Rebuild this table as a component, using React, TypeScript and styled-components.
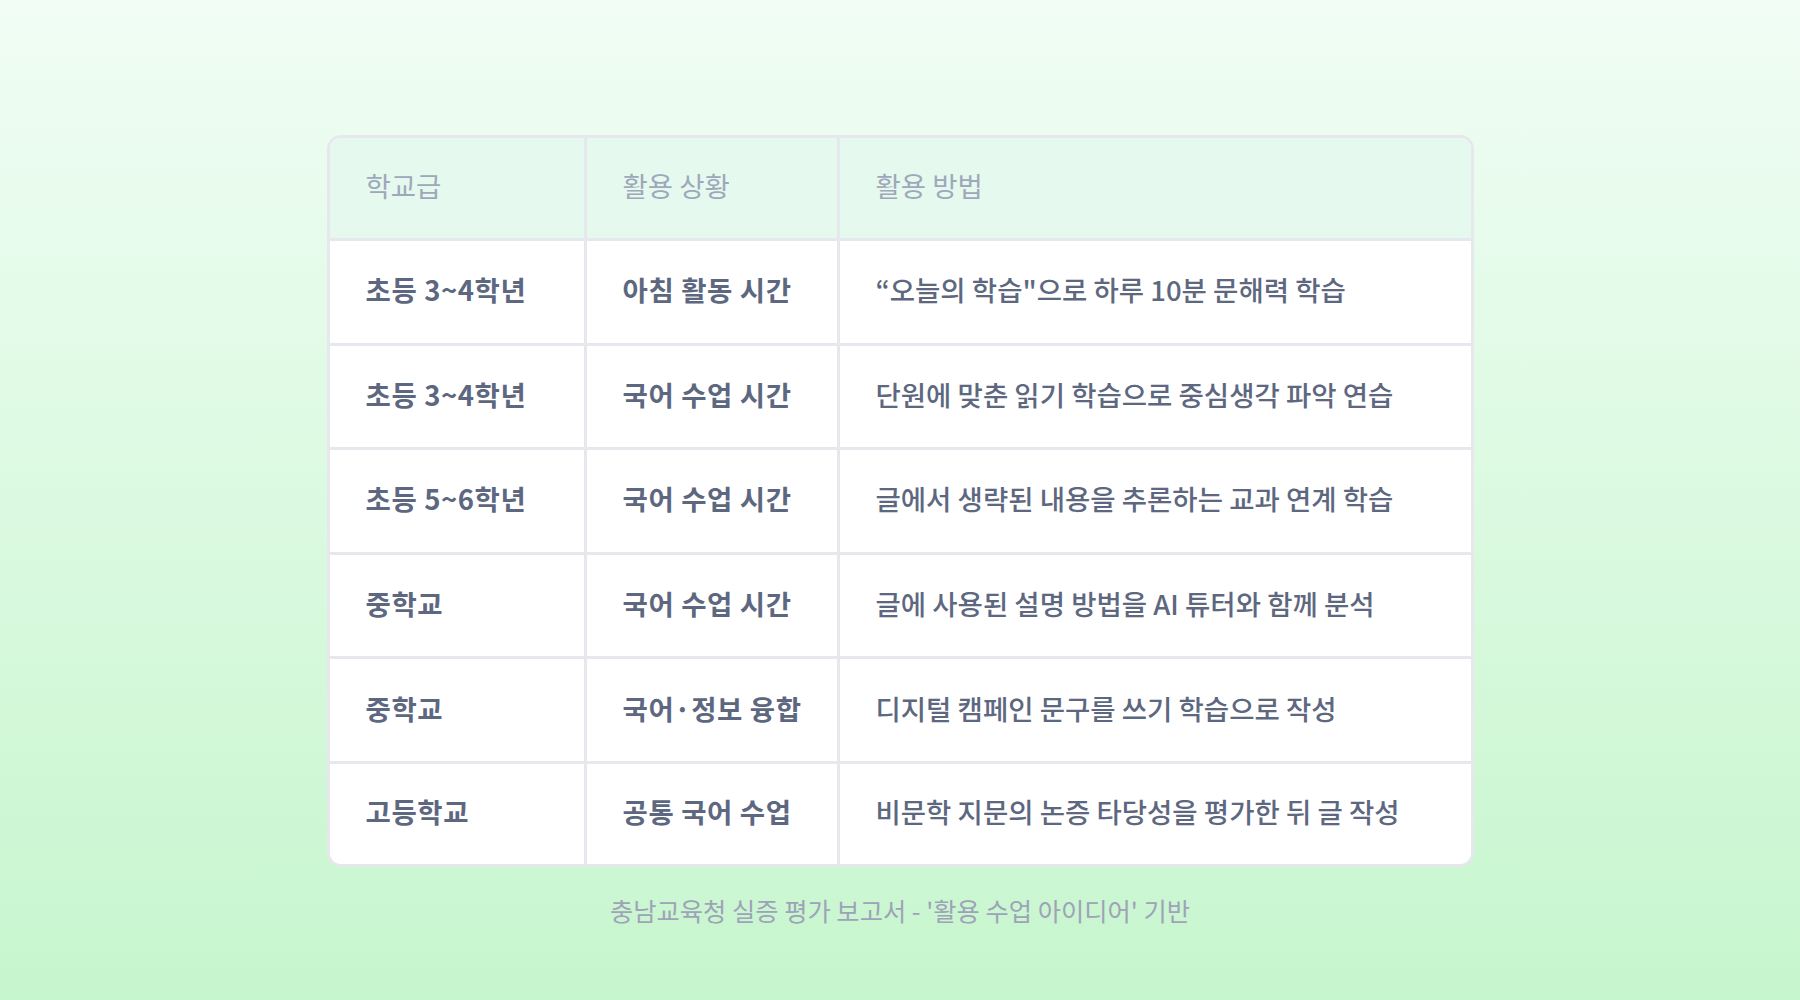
import React from "react";
import styled, { createGlobalStyle } from "styled-components";

const GlobalStyle = createGlobalStyle`
  html, body {
    margin: 0;
    padding: 0;
  }
  body {
    font-family: "Noto Sans CJK KR", "Noto Sans", sans-serif;
    -webkit-font-smoothing: antialiased;
  }
`;

const Page = styled.div`
  min-height: 100vh;
  box-sizing: border-box;
  background: linear-gradient(180deg, #f1fdf5 0%, #c6f6cd 100%);
  display: flex;
  flex-direction: column;
  align-items: center;
  padding-top: 135px;
`;

const Card = styled.div`
  width: 1147px;
  box-sizing: border-box;
  border: 3px solid #e7e8ee;
  border-radius: 14px;
  overflow: hidden;
  background: #ffffff;
`;

const Table = styled.table`
  width: 100%;
  border-collapse: separate;
  border-spacing: 0;
  table-layout: fixed;
`;

const Col = styled.col<{ $w?: number }>`
  width: ${(p) => (p.$w ? `${p.$w}px` : "auto")};
`;

const HeadCell = styled.th`
  height: 103px;
  box-sizing: border-box;
  padding: 0 36px 6px;
  text-align: left;
  font-size: 27.5px;
  font-weight: 400;
  color: #9ea8ba;
  background: #e6f9ee;
  border-bottom: 3px solid #e7e8ee;
  border-right: 3px solid #e7e8ee;
  &:last-child {
    border-right: none;
  }
`;

const Row = styled.tr`
  &:last-child td {
    border-bottom: none;
    height: 100px;
  }
`;

const Cell = styled.td<{ $strong?: boolean }>`
  height: 104.6px;
  box-sizing: border-box;
  padding: 0 36px 5px;
  font-size: 27.5px;
  font-weight: ${(p) => (p.$strong ? 600 : 500)};
  letter-spacing: ${(p) => (p.$strong ? "0.6px" : "0")};
  color: #5d6880;
  white-space: nowrap;
  border-bottom: 3px solid #e7e8ee;
  border-right: 3px solid #e7e8ee;
  &:last-child {
    border-right: none;
  }
`;

const Footer = styled.p`
  margin: 25px 0 0;
  font-size: 25.3px;
  line-height: 36px;
  color: #9ea3b8;
`;

const rows: [string, string, string][] = [
  ["초등 3~4학년", "아침 활동 시간", "“오늘의 학습\"으로 하루 10분 문해력 학습"],
  ["초등 3~4학년", "국어 수업 시간", "단원에 맞춘 읽기 학습으로 중심생각 파악 연습"],
  ["초등 5~6학년", "국어 수업 시간", "글에서 생략된 내용을 추론하는 교과 연계 학습"],
  ["중학교", "국어 수업 시간", "글에 사용된 설명 방법을 AI 튜터와 함께 분석"],
  ["중학교", "국어·정보 융합", "디지털 캠페인 문구를 쓰기 학습으로 작성"],
  ["고등학교", "공통 국어 수업", "비문학 지문의 논증 타당성을 평가한 뒤 글 작성"],
];

export default function App() {
  return (
    <>
      <GlobalStyle />
      <Page>
        <Card>
          <Table>
            <colgroup>
              <Col $w={257} />
              <Col $w={253} />
              <Col />
            </colgroup>
            <thead>
              <tr>
                <HeadCell>학교급</HeadCell>
                <HeadCell>활용 상황</HeadCell>
                <HeadCell>활용 방법</HeadCell>
              </tr>
            </thead>
            <tbody>
              {rows.map((r, i) => (
                <Row key={i}>
                  <Cell $strong>{r[0]}</Cell>
                  <Cell $strong>{r[1]}</Cell>
                  <Cell>{r[2]}</Cell>
                </Row>
              ))}
            </tbody>
          </Table>
        </Card>
        <Footer>충남교육청 실증 평가 보고서 - '활용 수업 아이디어' 기반</Footer>
      </Page>
    </>
  );
}
